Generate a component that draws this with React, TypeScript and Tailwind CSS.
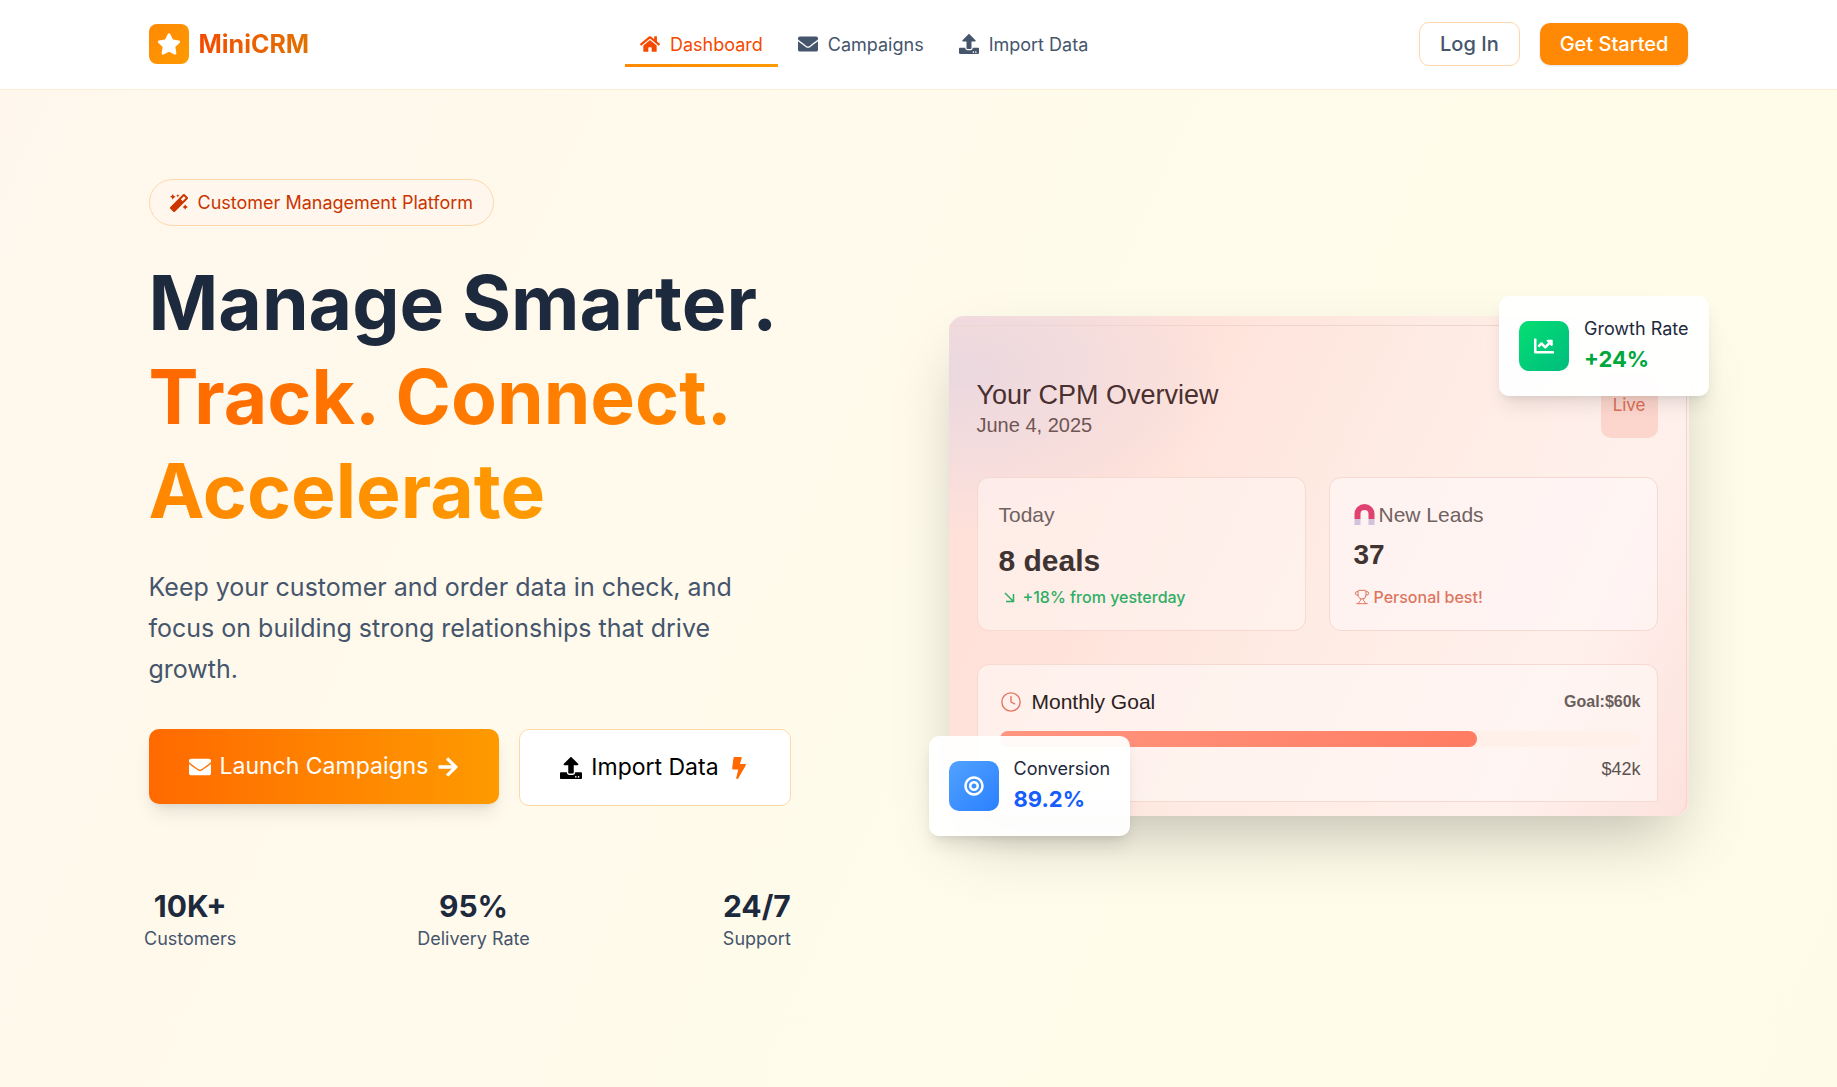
import React from 'react';
import {
  FaArrowRight,
  FaBolt,
  FaBullseye,
  FaChartLine,
  FaEnvelope,
  FaHome,
  FaMagic,
  FaStar,
  FaUpload,
} from 'react-icons/fa';
import { Clock, Trophy } from 'lucide-react';

const navLinks = [
  { label: 'Dashboard', icon: FaHome, active: true },
  { label: 'Campaigns', icon: FaEnvelope, active: false },
  { label: 'Import Data', icon: FaUpload, active: false },
];

const stats = [
  { value: '10K+', label: 'Customers' },
  { value: '95%', label: 'Delivery Rate' },
  { value: '24/7', label: 'Support' },
];

const Header: React.FC = () => (
  <header className="border-b border-orange-100 bg-white">
    <div className="mx-auto flex h-[89px] max-w-[1600px] items-center justify-between px-[30px] pb-px">
      <a href="#" className="flex items-center gap-[10px]">
        <span className="flex size-10 items-center justify-center rounded-lg bg-linear-to-br from-[#ff8904] to-[#fe9a00]">
          <FaStar className="size-6 text-white" />
        </span>
        <span className="bg-linear-to-r from-[#f54900] to-[#e17100] bg-clip-text text-[25px] leading-9 font-bold text-transparent">
          MiniCRM
        </span>
      </a>

      <nav className="flex gap-[5px]">
        {navLinks.map(({ label, icon: Icon, active }) => (
          <a
            key={label}
            href="#"
            className={
              active
                ? 'relative flex h-[46px] items-center gap-[10px] px-[15px] text-[#f54900]'
                : 'relative flex h-[46px] items-center gap-[10px] px-[15px] text-slate-600'
            }
          >
            <Icon className="size-5" />
            <span className="text-[18px]">{label}</span>
            {active && (
              <span className="absolute inset-x-0 bottom-0 h-[3px] bg-linear-to-r from-[#ff8904] to-[#fe9a00]" />
            )}
          </a>
        ))}
      </nav>

      <div className="flex items-center gap-5">
        <button className="h-11 rounded-[10px] border border-orange-200 bg-white px-5 text-[20px] font-medium text-slate-600">
          Log In
        </button>
        <button className="h-[42px] rounded-[10px] bg-[#ff8904] px-5 text-[20px] font-medium text-white shadow-sm">
          Get Started
        </button>
      </div>
    </div>
  </header>
);

const OverviewCard: React.FC = () => (
  <div className="flex min-h-[500px] flex-col rounded-[15px] bg-[radial-gradient(ellipse_at_2%_11%,#ead8df_0%,#ead8df00_26%),linear-gradient(115deg,#ffe0da_0%,#ffe2da_25%,#feebe3_50%,#fff0ec_80%,#fde2dd_100%)] font-['Liberation_Sans',sans-serif] shadow-[0_31px_62px_-15px_rgba(0,0,0,0.25)]">
    <div className="mt-[9px] mr-[2px] flex grow flex-col rounded-br-[15px] border-t border-r border-[#f3d3cd] pr-[28px] pb-[14px] pl-[28px]">
      <div className="flex items-start justify-between">
        <div className="pt-[53px]">
          <h2 className="text-[27px] leading-8 text-[#4a302f]">Your CPM Overview</h2>
          <p className="text-[20px] leading-7 text-[#6f5655]">June 4, 2025</p>
        </div>
        <span className="mt-[48px] rounded-[10px] bg-[#fcd6cd] px-3 pt-[17px] pb-[19px] font-[Inter,sans-serif] text-[17px] leading-7 text-[#dd6e56]">
          Live
        </span>
      </div>

      <div className="mt-[38px] grid grid-cols-2 gap-[23px]">
        <section className="flex h-[154px] flex-col rounded-xl border border-[#f6d9d1] bg-[#fff5f1]/60 px-[21px] pt-[23px]">
          <h3 className="text-[21px] leading-7 text-[#6f625f]">Today</h3>
          <p className="mt-[14px] text-[30px] leading-9 font-bold text-[#3f3432]">8 deals</p>
          <p className="mt-[6px] flex items-center gap-2 font-[Inter,sans-serif] text-[16px] leading-6 font-medium text-[#2dae64]">
            <svg viewBox="0 0 12 12" className="ml-1 size-3" fill="none" stroke="currentColor" strokeWidth="1.5">
              <path d="M2 2l8 8M10.500 3v7.500H3" />
            </svg>
            +18% from yesterday
          </p>
        </section>
        <section className="flex h-[154px] flex-col rounded-xl border border-[#f6d9d1] bg-[#fff7f6]/70 px-6 pt-[23px]">
          <h3 className="flex items-center gap-1 text-[21px] leading-7 text-[#6f625f]">
            <svg viewBox="0 0 20 21" className="size-[21px]">
              <path d="M0 15V10a10 10 0 0 1 20 0v5h-6v-5a4 4 0 0 0-8 0v5z" fill="#e0416f" />
              <path d="M0 15h6v6H0zM14 15h6v6h-6z" fill="#d3c2dd" />
            </svg>
            New Leads
          </h3>
          <p className="mt-[10px] text-[28px] leading-8 font-bold text-[#3f3432]">37</p>
          <p className="mt-[14px] flex items-center gap-1 font-[Inter,sans-serif] text-[16px] leading-6 font-medium text-[#dd7660]">
            <Trophy className="size-4" strokeWidth={1.500} />
            Personal best!
          </p>
        </section>
      </div>

      <section className="mt-[33px] h-[138px] rounded-t-xl border border-[#f6d9d1] bg-[#fff6f4]/70 pr-4 pl-[22px]">
        <div className="flex items-center justify-between pt-[23px]">
          <h3 className="flex items-center gap-[10px] text-[21px] leading-7 text-[#2c2120]">
            <Clock className="size-[22px] text-[#e5735e]" strokeWidth={1.500} />
            Monthly Goal
          </h3>
          <p className="text-[16px] leading-7 font-bold text-[#6a5f5c]">Goal:$60k</p>
        </div>
        <div className="mt-[15px] h-4 rounded-full bg-[#fff0ea]">
          <div className="h-4 w-[74.5%] rounded-full bg-linear-to-r from-[#ff9580] to-[#ff7d62]" />
        </div>
        <p className="mt-2 text-right text-[18px] leading-7 text-[#5c5250]">$42k</p>
      </section>
    </div>
  </div>
);

const Hero: React.FC = () => (
  <section className="mx-auto grid max-w-[1600px] grid-cols-2 items-center gap-[60px] px-[30px] py-[89px]">
    <div>
      <div className="inline-flex h-[47px] items-center gap-[10px] rounded-full border border-orange-200 bg-orange-50 px-5 text-[#ca3500]">
        <FaMagic className="size-[18px]" />
        <span className="text-[18px]">Customer Management Platform</span>
      </div>

      <h1 className="mt-[30px] text-[75px] leading-[94px] font-bold text-slate-800">
        Manage Smarter.
        <br />
        <span className="bg-linear-to-r from-[#ff6900] to-[#fe9a00] bg-clip-text text-transparent">
          Track. Connect. Accelerate
        </span>
      </h1>

      <p className="mt-[29px] max-w-[640px] text-[25px] leading-[41px] text-slate-600">
        Keep your customer and order data in check, and focus on building strong relationships that drive growth.
      </p>

      <div className="mt-[39px] flex items-start gap-5">
        <button className="flex h-[75px] items-center gap-[9px] rounded-[10px] bg-linear-to-r from-[#ff6900] to-[#fe9a00] px-10 text-[23px] text-white shadow-[0_12px_19px_-4px_rgba(0,0,0,0.1),0_5px_8px_-5px_rgba(0,0,0,0.1)]">
          <FaEnvelope className="size-[22px]" />
          Launch Campaigns
          <FaArrowRight className="size-[22px]" />
        </button>
        <button className="flex h-[77px] items-center gap-[9px] rounded-[10px] border border-orange-200 bg-white px-10 text-[23px] text-black">
          <FaUpload className="size-[22px]" />
          Import Data
          <FaBolt className="size-[22px] text-[#ff6900]" />
        </button>
      </div>

      <div className="mt-[80px] grid max-w-[650px] grid-cols-3 gap-[200px]">
        {stats.map((stat) => (
          <div key={stat.label} className="flex flex-col items-center whitespace-nowrap">
            <span className="text-[30px] leading-10 font-bold text-slate-800">{stat.value}</span>
            <span className="text-[18px] leading-[26px] text-slate-600">{stat.label}</span>
          </div>
        ))}
      </div>
    </div>

    <div className="relative">
      <OverviewCard />

      <div className="absolute -top-5 -right-5 flex h-[100px] items-center gap-[15px] rounded-[10px] bg-white/95 px-5 shadow-[0_12px_19px_-4px_rgba(0,0,0,0.1),0_5px_8px_-5px_rgba(0,0,0,0.1)]">
        <span className="flex size-[50px] items-center justify-center rounded-[10px] bg-linear-to-br from-[#05df72] to-[#00bc7d]">
          <FaChartLine className="size-5 text-white" />
        </span>
        <div>
          <p className="text-[18px] leading-[26px] text-slate-800">Growth Rate</p>
          <p className="text-[22px] leading-[34px] font-bold text-[#00a63e]">+24%</p>
        </div>
      </div>

      <div className="absolute -bottom-5 -left-5 flex h-[100px] items-center gap-[15px] rounded-[10px] bg-white/95 px-5 shadow-[0_12px_19px_-4px_rgba(0,0,0,0.1),0_5px_8px_-5px_rgba(0,0,0,0.1)]">
        <span className="flex size-[50px] items-center justify-center rounded-[10px] bg-linear-to-br from-[#51a2ff] to-[#2b7fff]">
          <FaBullseye className="size-5 text-white" />
        </span>
        <div>
          <p className="text-[18px] leading-[26px] text-slate-800">Conversion</p>
          <p className="text-[22px] leading-[34px] font-bold text-[#155dfc]">89.2%</p>
        </div>
      </div>
    </div>
  </section>
);

export default function App() {
  return (
    <div className="min-h-screen bg-[linear-gradient(114deg,#fff7ed_0%,#fffbeb_50%,#fefce8_100%)] font-[Inter,sans-serif]">
      <Header />
      <main>
        <Hero />
      </main>
    </div>
  );
}
